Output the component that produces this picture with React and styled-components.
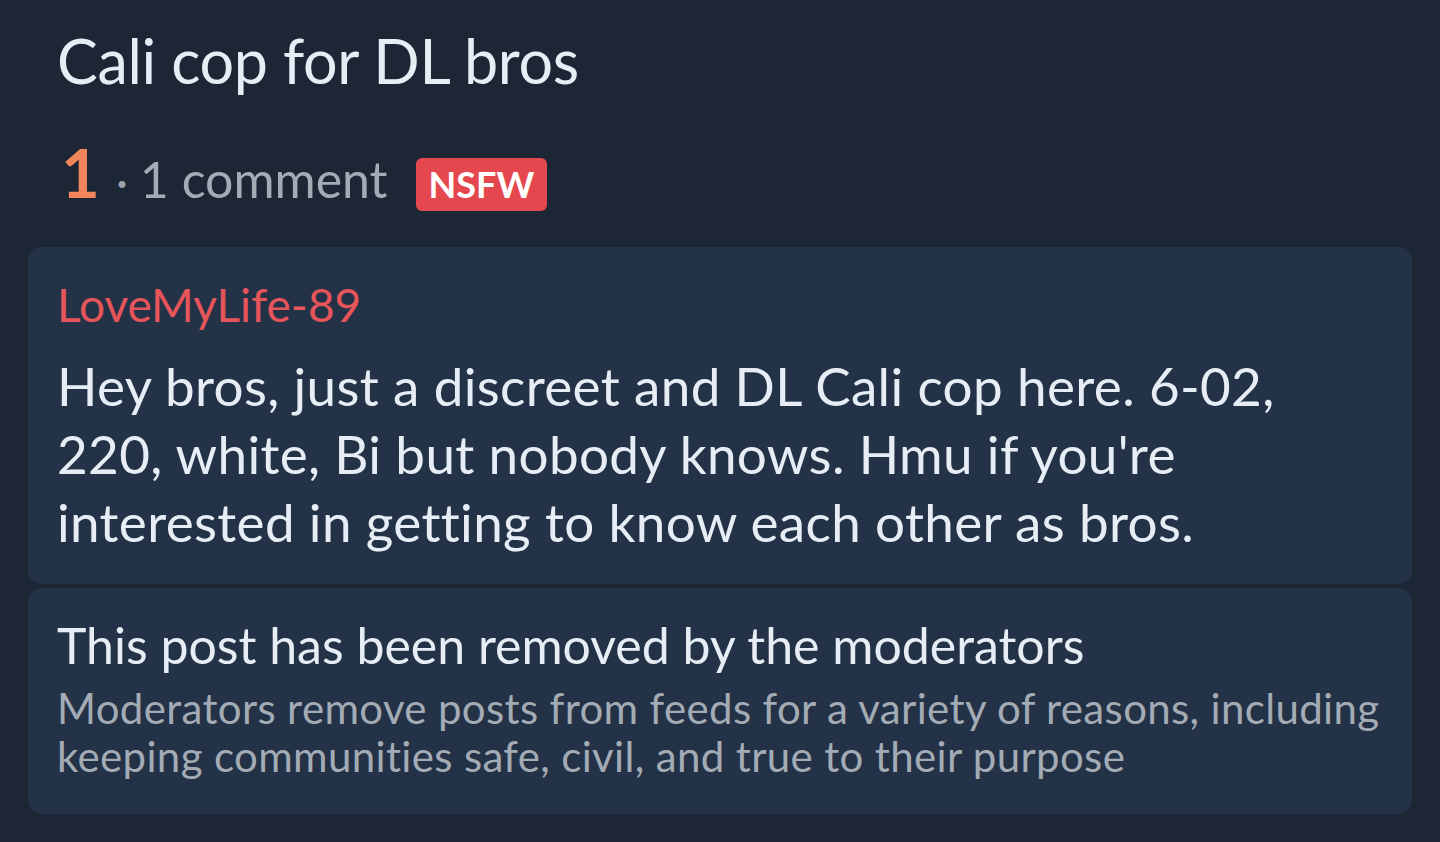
import React from "react";
import styled, { createGlobalStyle } from "styled-components";

const GlobalStyle = createGlobalStyle`
  html, body {
    margin: 0;
    padding: 0;
    background: #1c2634;
  }
  body {
    font-family: Lato, "Noto Sans", sans-serif;
    font-variant-ligatures: none;
  }
`;

const Page = styled.div`
  width: 1440px;
  height: 842px;
  overflow: hidden;
  background: #1c2634;
  box-sizing: border-box;
  padding: 21px 28px 0 28px;
`;

const Title = styled.h1`
  margin: 0 0 0 29px;
  font-size: 61px;
  font-weight: 400;
  letter-spacing: -0.3px;
  line-height: 80px;
  color: #e6edf5;
`;

const Meta = styled.div`
  display: flex;
  align-items: baseline;
  margin: 39px 0 0 33px;
  line-height: 64px;
`;

const Score = styled.span`
  font-size: 67px;
  font-weight: 700;
  color: #f0845a;
`;

const Dot = styled.span`
  font-size: 46px;
  color: #9aa3ad;
  margin: 0 12px 0 16px;
`;

const Comments = styled.span`
  font-size: 50px;
  color: #a3abb5;
`;

const Badge = styled.span`
  display: inline-block;
  margin-left: 28px;
  background: #e5474f;
  color: #fff;
  font-weight: 700;
  font-size: 36px;
  line-height: 53px;
  padding: 0 13px;
  border-radius: 6px;
`;

const Card = styled.section`
  background: #243247;
  border-radius: 14px;
  padding: ${(p) => p.$pad};
  margin-top: ${(p) => p.$top};
`;

const Author = styled.div`
  font-size: 46px;
  line-height: 56px;
  color: #e5555a;
`;

const Body = styled.p`
  margin: 19px 0 0 0;
  font-size: 53px;
  letter-spacing: 0.35px;
  line-height: 68px;
  color: #e6edf5;
`;

const RemovedTitle = styled.div`
  font-size: 50px;
  line-height: 60px;
  color: #e6edf5;
`;

const RemovedText = styled.p`
  margin: 9px 0 0 0;
  font-size: 42px;
  letter-spacing: 0.35px;
  line-height: 48px;
  color: #a3abb5;
`;

export default function App() {
  return (
    <>
      <GlobalStyle />
      <Page>
        <Title>Cali cop for DL bros</Title>
        <Meta>
          <Score>1</Score>
          <Dot>·</Dot>
          <Comments>1 comment</Comments>
          <Badge>NSFW</Badge>
        </Meta>
        <Card $pad="30px 29px 28px 29px" $top="34px">
          <Author>LoveMyLife-89</Author>
          <Body>
            Hey bros, just a discreet and DL Cali cop here. 6-02, 220, white,
            Bi but nobody knows. Hmu if you're interested in getting to know
            each other as bros.
          </Body>
        </Card>
        <Card $pad="27px 29px 34px 29px" $top="4px">
          <RemovedTitle>This post has been removed by the moderators</RemovedTitle>
          <RemovedText>
            Moderators remove posts from feeds for a variety of reasons,
            including keeping communities safe, civil, and true to their purpose
          </RemovedText>
        </Card>
      </Page>
    </>
  );
}
